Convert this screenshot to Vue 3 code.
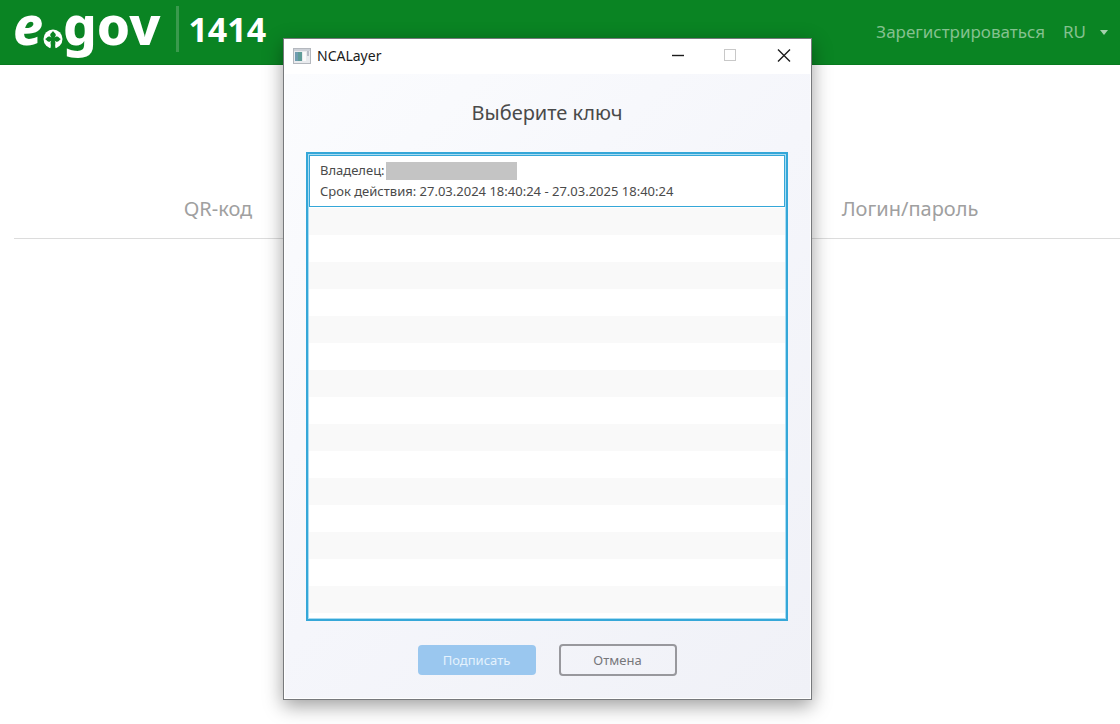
<script setup>
const emptyRows = 15
</script>

<template>
  <div class="page">
    <header class="topbar">
      <a class="brand" href="#" aria-label="e.gov">
        <span class="brand-e">e</span>
        <svg class="brand-mark" viewBox="0 0 20 20" aria-hidden="true">
          <circle cx="10" cy="10" r="9.5" fill="#fff" />
          <path
            d="M10 2 C10.800 3.600 12.800 4.200 12.800 6 C12.800 7 12 7.700 11.500 8.500 C12.300 8 13 7.400 14 7.400 C15.600 7.400 16.300 9.400 18 10 C16.500 11 15.500 12.800 14 12.800 C13 12.800 12.500 12 11.700 11.700 C12.200 12.600 12.700 13.500 12.300 15 C12 16.500 12.200 18 12.800 20 H7.200 C7.800 18 8 16.500 7.700 15 C7.300 13.500 7.800 12.600 8.300 11.700 C7.500 12 7 12.800 6 12.800 C4.500 12.800 3.500 11 2 10 C3.700 9.400 4.400 7.400 6 7.400 C7 7.400 7.700 8 8.500 8.500 C8 7.700 7.200 7 7.200 6 C7.200 4.200 9.200 3.600 10 2Z"
            fill="#0a8423"
          />
        </svg>
        <span class="brand-gov">gov</span>
      </a>
      <span class="phone">1414</span>
      <nav class="account">
        <a class="register" href="#">Зарегистрироваться</a>
        <button class="lang" type="button">RU<span class="caret"></span></button>
      </nav>
    </header>

    <nav class="tabs">
      <a class="tab first" href="#">QR-код</a>
      <a class="tab last" href="#">Логин/пароль</a>
    </nav>

    <section class="window" role="dialog" aria-labelledby="window-heading">
      <div class="titlebar">
        <svg class="app-icon" viewBox="0 0 18 16" aria-hidden="true">
          <rect x="0.500" y="0.500" width="17" height="15" fill="#e9ebee" stroke="#b4b8be" />
          <rect x="1" y="1" width="16" height="2" fill="#cdd1d8" />
          <rect x="2" y="4" width="7" height="9" fill="#5f9c98" />
          <rect x="2" y="4" width="3" height="9" fill="#6f9cb0" />
          <rect x="10" y="4" width="3" height="9" fill="#fafafa" />
          <rect x="14" y="3" width="2" height="5" fill="#b9bec8" />
        </svg>
        <span class="app-name">NCALayer</span>
        <div class="controls">
          <button type="button" aria-label="Свернуть">
            <svg viewBox="0 0 14 14"><path d="M1 6.500H13" stroke="#1c1c1c" stroke-width="1.400" /></svg>
          </button>
          <button type="button" aria-label="Развернуть" disabled>
            <svg viewBox="0 0 14 14"><rect x="0.500" y="0.500" width="11" height="11" fill="none" stroke="#c8c8c8" /></svg>
          </button>
          <button type="button" aria-label="Закрыть">
            <svg viewBox="0 0 14 14"><path d="M1 0.500L13 12.500M13 0.500L1 12.500" stroke="#1c1c1c" stroke-width="1.400" /></svg>
          </button>
        </div>
      </div>

      <div class="body">
        <h1 id="window-heading">Выберите ключ</h1>
        <div class="keys">
          <button class="key" type="button">
            <span class="line">Владелец:<span class="redacted"></span></span>
            <span class="line">Срок действия: 27.03.2024 18:40:24 - 27.03.2025 18:40:24</span>
          </button>
          <div v-for="n in emptyRows" :key="n" class="row"></div>
        </div>
        <div class="actions">
          <button class="sign" type="button" disabled>Подписать</button>
          <button class="cancel" type="button">Отмена</button>
        </div>
      </div>
    </section>
  </div>
</template>

<style>
body {
  margin: 0;
  background: #fff;
}
</style>

<style scoped>
.page {
  position: relative;
  min-height: 100vh;
  overflow: hidden;
  font-family: "Noto Sans", "Open Sans", sans-serif;
}
a {
  text-decoration: none;
}
button {
  margin: 0;
  padding: 0;
  border: 0;
  background: none;
  font: inherit;
}

.topbar {
  display: flex;
  align-items: center;
  box-sizing: border-box;
  height: 65px;
  padding: 0 12px 0 13px;
  background: #0a8423;
  border-bottom: 1px solid #087a1f;
}
.brand {
  display: flex;
  align-items: flex-start;
  height: 64px;
  color: #fff;
  font-size: 53px;
  line-height: 50px;
  font-weight: 800;
}
.brand-e {
  font-style: italic;
}
.brand-mark {
  width: 20px;
  height: 20px;
  margin-top: 29px;
}
.phone {
  margin-left: 16px;
  margin-bottom: 6px;
  padding-left: 9px;
  border-left: 3px solid #3a9a4d;
  color: #fff;
  font-size: 34px;
  line-height: 46px;
  font-weight: 700;
}
.account {
  display: flex;
  align-items: center;
  gap: 18px;
  margin-left: auto;
  color: #84c18f;
  font-size: 17px;
  line-height: 24px;
}
.register {
  color: inherit;
}
.lang {
  display: flex;
  align-items: center;
  gap: 14px;
  color: inherit;
}
.caret {
  border: 4px solid transparent;
  border-top: 5px solid #a5d2ad;
  border-bottom: 0;
}

.tabs {
  display: grid;
  grid-template-columns: repeat(3, 1fr);
  margin: 120px 0 0 14px;
  padding: 0 37px 0 31px;
  border-bottom: 1px solid #dcdcdc;
}
.tab {
  padding: 8px 0 13px;
  color: #a0a0a0;
  font-size: 20px;
  line-height: 32px;
  text-align: center;
}
.last {
  grid-column: 3;
}

.window {
  position: absolute;
  top: 38px;
  left: 283px;
  width: 527px;
  border: 1px solid #77797c;
  background: #fff;
  box-shadow: 0 6px 18px rgba(0, 0, 0, 0.38);
}
.titlebar {
  display: flex;
  align-items: center;
  box-sizing: border-box;
  height: 35px;
  padding: 0 20px 2px 9px;
}
.app-icon {
  width: 18px;
  height: 16px;
}
.app-name {
  margin-left: 6px;
  color: #1a1a1a;
  font-size: 14px;
  line-height: 20px;
}
.controls {
  display: flex;
  gap: 39px;
  margin-left: auto;
}
.controls button,
.controls svg {
  display: block;
  width: 14px;
  height: 14px;
}

.body {
  margin: 0 1px 1px;
  padding: 24px 22px 22px 21px;
  background: linear-gradient(135deg, #fbfcfe, #f5f6fb 50%, #f0f1f7);
}
h1 {
  margin: 0 0 24px;
  color: #4a4a4a;
  font-size: 20px;
  line-height: 30px;
  font-weight: 400;
  text-align: center;
}
.keys {
  border: 2px solid #35a7d8;
  outline: 1px solid #a9dcf2;
  outline-offset: -3px;
  padding: 1px 1px 6px;
  background: #fff;
}
.key {
  display: block;
  box-sizing: border-box;
  width: 100%;
  margin-bottom: 1px;
  padding: 4px 9px 4px 10px;
  border: 1px solid #35a7d8;
  background: #fff;
  color: #4a4a4a;
  font-size: 13px;
  text-align: left;
}
.line {
  display: flex;
  align-items: center;
  height: 21px;
  line-height: 21px;
}
.redacted {
  width: 131px;
  height: 18px;
  margin-left: 1px;
  background: #c4c4c4;
}
.row {
  height: 27px;
}
.row:nth-child(even) {
  background: #f9f9f9;
}
.actions {
  display: flex;
  justify-content: center;
  align-items: center;
  gap: 23px;
  margin-top: 23px;
}
.actions button {
  box-sizing: border-box;
  width: 118px;
  border-radius: 4px;
  font-size: 13px;
  line-height: 20px;
}
.sign {
  padding: 5px 0;
  background: #9ac7ef;
  color: #e4f2fd;
}
.actions .cancel {
  padding: 4px 0;
  border: 2px solid #98989d;
  color: #77777b;
}
</style>
